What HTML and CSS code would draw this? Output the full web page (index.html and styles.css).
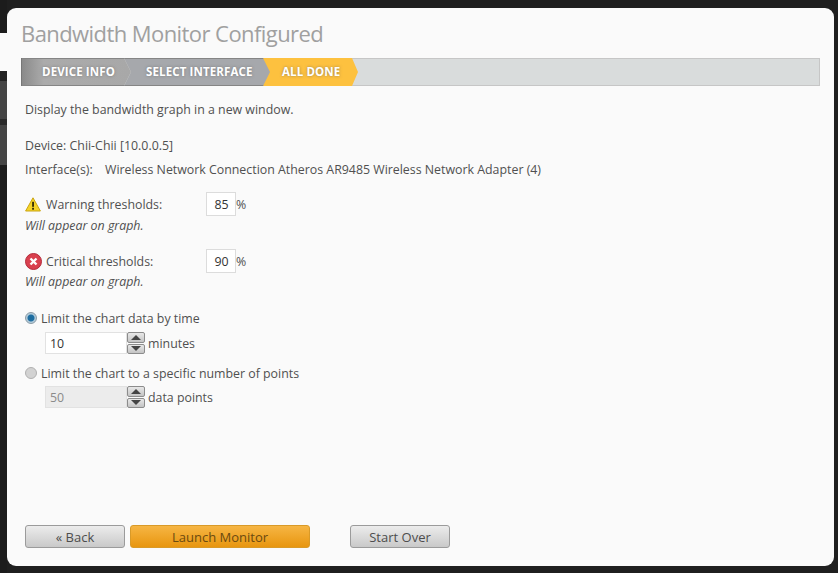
FILE: index.html
```html
<!DOCTYPE html>
<html lang="en">
<head>
  <meta charset="UTF-8">
  <title>Bandwidth Monitor Configured</title>
  <link rel="stylesheet" href="styles.css">
</head>
<body>
  <div class="backdrop">
    <div class="strip strip-dark"></div>
    <div class="strip strip-light"></div>
    <div class="strip strip-mid"></div>
    <div class="strip strip-dark-end"></div>
  </div>
  <main class="panel">
    <h1>Bandwidth Monitor Configured</h1>
    <div class="wizard">
      <div class="step step-first">DEVICE INFO</div>
      <div class="step step-second">SELECT INTERFACE</div>
      <div class="step step-current">ALL DONE</div>
    </div>
    <div class="content">
      <p class="intro">Display the bandwidth graph in a new window.</p>
      <p class="info">Device: Chii-Chii [10.0.0.5]</p>
      <p class="info info-iface"><span class="iface-label">Interface(s):</span>Wireless Network Connection Atheros AR9485 Wireless Network Adapter (4)</p>

      <div class="threshold threshold-warning">
        <div class="threshold-row">
          <svg class="icon" width="16" height="15" viewBox="0 0 16 15">
            <path d="M8 .8 15.4 14H.6z" fill="#f5d327" stroke="#c9a412" stroke-width="1" stroke-linejoin="round"/>
            <rect x="7.1" y="4.8" width="1.9" height="5" fill="#3a3206"/>
            <rect x="7.1" y="10.8" width="1.9" height="1.9" fill="#3a3206"/>
          </svg>
          <span class="threshold-label">Warning thresholds:</span>
          <input class="pct" type="text" value="85"><span class="unit">%</span>
        </div>
        <div class="note">Will appear on graph.</div>
      </div>

      <div class="threshold threshold-critical">
        <div class="threshold-row">
          <svg class="icon" width="17" height="17" viewBox="0 0 17 17">
            <circle cx="8.5" cy="8.5" r="8" fill="#d9404e" stroke="#b32b3a"/>
            <path d="M5.5 5.5 11.5 11.5M11.5 5.5 5.5 11.5" stroke="#fff" stroke-width="2.4" fill="none"/>
          </svg>
          <span class="threshold-label">Critical thresholds:</span>
          <input class="pct" type="text" value="90"><span class="unit">%</span>
        </div>
        <div class="note">Will appear on graph.</div>
      </div>

      <div class="limit limit-time">
        <div class="radio-row"><span class="radio radio-on"></span>Limit the chart data by time</div>
        <div class="spin-row">
          <input class="spin-input" type="text" value="10">
          <span class="spin">
            <span class="spin-btn"><svg width="10" height="5" viewBox="0 0 10 5"><path d="M5 0 10 5H0z" fill="#444"/></svg></span>
            <span class="spin-btn"><svg width="10" height="5" viewBox="0 0 10 5"><path d="M0 0H10L5 5z" fill="#444"/></svg></span>
          </span>
          <span class="spin-unit">minutes</span>
        </div>
      </div>

      <div class="limit limit-points">
        <div class="radio-row"><span class="radio"></span>Limit the chart to a specific number of points</div>
        <div class="spin-row">
          <input class="spin-input" type="text" value="50" disabled>
          <span class="spin">
            <span class="spin-btn"><svg width="10" height="5" viewBox="0 0 10 5"><path d="M5 0 10 5H0z" fill="#444"/></svg></span>
            <span class="spin-btn"><svg width="10" height="5" viewBox="0 0 10 5"><path d="M0 0H10L5 5z" fill="#444"/></svg></span>
          </span>
          <span class="spin-unit">data points</span>
        </div>
      </div>
    </div>
    <div class="actions">
      <button class="btn btn-back" type="button">&laquo; Back</button>
      <button class="btn btn-primary" type="button">Launch Monitor</button>
      <button class="btn btn-over" type="button">Start Over</button>
    </div>
  </main>
</body>
</html>
```

FILE: styles.css
```css
* {
  box-sizing: border-box;
}
html, body {
  height: 100%;
}
body {
  margin: 0;
  display: flex;
  background: #1f1f1f;
  color: #505050;
  font-family: "Open Sans", "Noto Sans", Arial, sans-serif;
  font-size: 12.37px;
  overflow: hidden;
}
.backdrop {
  width: 7px;
  flex: none;
  display: flex;
  flex-direction: column;
}
.strip-dark {
  height: 33px;
  background: #1c1c1c;
}
.strip-light {
  height: 38px;
  background: #fafafa;
}
.strip-mid {
  height: 94px;
  background: linear-gradient(#222 0, #222 10px, #444 10px, #444 48px, #2a2a2a 48px, #2a2a2a 54px, #444 54px, #444 100%);
}
.strip-dark-end {
  flex: 1;
  background: #1c1c1c;
}
.panel {
  width: 827px;
  height: 558px;
  margin-top: 8px;
  display: flex;
  flex-direction: column;
  background: #fafafa;
  border-radius: 9px;
  padding: 0 14px;
}
h1 {
  margin: 0;
  padding-top: 10px;
  height: 50px;
  font-size: 22px;
  line-height: 30px;
  font-weight: 400;
  color: #a0a0a0;
  letter-spacing: -0.57px;
}
.wizard {
  display: flex;
  height: 28px;
  width: 799px;
  background: #d9dcdc;
  border: 1px solid #c6c6c6;
  border-left: 0;
}
.step {
  height: 28px;
  margin-top: -1px;
  color: #fff;
  font-size: 11.5px;
  font-weight: 700;
  letter-spacing: 0.12px;
  line-height: 28px;
  text-shadow: 0 0 3px rgba(90, 90, 90, .6);
  clip-path: polygon(0 0, calc(100% - 7px) 0, 100% 50%, calc(100% - 7px) 100%, 0 100%);
}
.step-first {
  width: 110px;
  padding-left: 20px;
  background: linear-gradient(90deg, #8a8a8a, #ababab 20%, #a8a8a8);
  border-left: 1px solid #777;
  box-shadow: inset 0 1px #858585, inset 0 -1px #858585;
  position: relative;
  z-index: 3;
}
.step-second {
  width: 146px;
  margin-left: -7px;
  padding-left: 22px;
  background: #a6a8ac;
  box-shadow: inset 0 1px #858585, inset 0 -1px #858585;
  position: relative;
  z-index: 2;
  clip-path: polygon(0 0, calc(100% - 7px) 0, 100% 50%, calc(100% - 7px) 100%, 0 100%, 7px 50%);
}
.step-current {
  width: 96px;
  margin-left: -8px;
  padding-left: 20px;
  background: #fdc13f;
  clip-path: polygon(0 0, calc(100% - 6px) 0, 100% 50%, calc(100% - 6px) 100%, 0 100%, 7px 50%);
}
.content {
  padding: 0 4px;
}
p {
  margin: 0;
}
.intro {
  margin-top: 15px;
  line-height: 18px;
}
.info {
  line-height: 18px;
}
.intro + .info {
  margin-top: 18px;
}
.info-iface {
  margin-top: 6px;
}
.iface-label {
  display: inline-block;
  width: 80px;
}
.threshold-warning {
  margin-top: 13px;
}
.threshold-critical {
  margin-top: 14px;
}
.threshold-critical .note {
  margin-top: 0;
}
.threshold-row {
  display: flex;
  align-items: center;
  height: 24px;
}
.icon {
  flex: none;
  margin-right: 5px;
}
.threshold-label {
  width: 160px;
}
.threshold-critical .icon {
  margin-right: 4px;
}
.pct {
  width: 30px;
  height: 24px;
  border: 1px solid #dcdcdc;
  background: #fff;
  color: #333;
  font: inherit;
  text-align: center;
  padding: 0 0 0 1px;
}
.unit {
  margin-left: 0;
}
.note {
  margin-top: 1px;
  font-style: italic;
  line-height: 18px;
}
.limit-time {
  margin-top: 17px;
}
.limit-points {
  margin-top: 8px;
}
.radio-row {
  display: flex;
  align-items: center;
  height: 20px;
}
.radio {
  width: 12px;
  height: 12px;
  margin-right: 4px;
  border-radius: 50%;
  background: #d2d2d2;
  border: 1px solid #b0b0b0;
}
.radio-on {
  background: radial-gradient(circle, #1c6a9b 0, #1f6fa3 3px, #b3ccdb 4px);
  border-color: #8a9aa5;
}
.spin-row {
  display: flex;
  align-items: center;
  height: 24px;
  margin-top: 3px;
  margin-left: 20px;
}
.limit-points .spin-row {
  margin-top: 2px;
}
.spin-input {
  width: 82px;
  height: 22px;
  border: 1px solid #e2e2e2;
  background: #fff;
  color: #333;
  font: inherit;
  padding: 0 4px;
}
.spin-input:disabled {
  background: #ececec;
  color: #8a8a8a;
}
.spin {
  width: 18px;
  height: 22px;
  display: flex;
  flex-direction: column;
  gap: 1px;
}
.spin-btn {
  flex: 1;
  display: flex;
  align-items: center;
  justify-content: center;
  background: linear-gradient(#e8e8e8, #c4c4c4);
  border: 1px solid #8c8c8c;
  border-radius: 2px;
}
.spin-unit {
  margin-left: 3px;
}
.actions {
  margin-top: auto;
  margin-bottom: 18px;
  padding-left: 4px;
  display: flex;
}
.btn {
  height: 23px;
  padding: 0;
  font-family: inherit;
  font-size: 13px;
  color: #4d4d4d;
  border: 1px solid #9b9b9b;
  border-radius: 3px;
  background: linear-gradient(#ececec, #c9c9c9);
}
.btn-back, .btn-over {
  width: 100px;
}
.btn-primary {
  width: 180px;
  margin-left: 5px;
  color: #6b4a10;
  border-color: #d99a28;
  background: linear-gradient(#f6b544, #e8960f);
}
.btn-over {
  margin-left: 40px;
}
```
